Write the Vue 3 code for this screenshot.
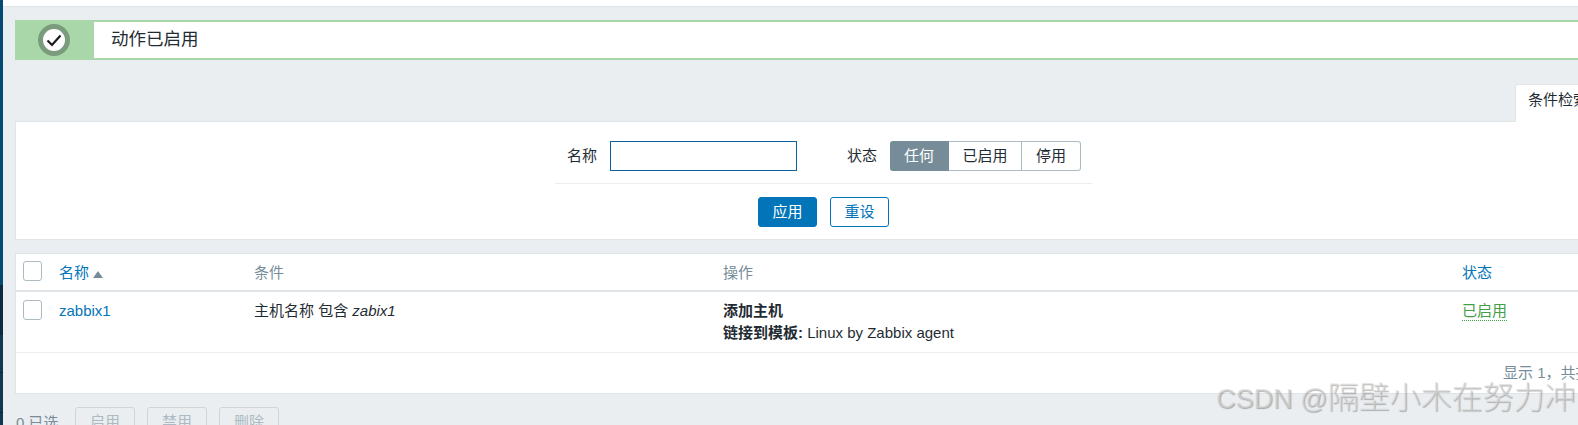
<script setup>
const segments = [
  { label: '任何', active: true },
  { label: '已启用', active: false },
  { label: '停用', active: false },
]
const bulk = ['启用', '禁用', '删除']
</script>

<template>
  <div class="page">
    <aside class="rail"></aside>
    <div class="main">
      <div class="topstrip"></div>
      <div class="content">
        <section class="msg">
          <div class="msg-icon">
            <span class="ring">
              <svg width="16" height="13" viewBox="0 0 16 13">
                <path d="M1.5 6.5 L6 11 L14.5 1.5" fill="none" stroke="#1b1b1b" stroke-width="2.2" />
              </svg>
            </span>
          </div>
          <div class="msg-text">动作已启用</div>
        </section>

        <div class="tabs"><div class="tab">条件检索</div></div>

        <section class="filter">
          <div class="filter-fields">
            <label class="flabel">名称</label>
            <input class="finput" type="text" />
            <label class="flabel status-label">状态</label>
            <div class="seg">
              <span v-for="s in segments" :key="s.label" class="seg-item" :class="{ on: s.active }">{{ s.label }}</span>
            </div>
          </div>
          <div class="filter-actions">
            <button class="btn primary">应用</button>
            <button class="btn outline">重设</button>
          </div>
        </section>

        <section class="list">
          <div class="row head">
            <div class="c0"><span class="check"></span></div>
            <div class="c1"><a class="link">名称</a><i class="arrow"></i></div>
            <div class="c2 muted">条件</div>
            <div class="c3 muted">操作</div>
            <div class="c4"><a class="link">状态</a></div>
          </div>
          <div class="row body">
            <div class="c0"><span class="check"></span></div>
            <div class="c1"><a class="link">zabbix1</a></div>
            <div class="c2">主机名称 包含 <em>zabix1</em></div>
            <div class="c3 ops"><b>添加主机</b><br /><b>链接到模板:</b> Linux by Zabbix agent</div>
            <div class="c4"><span class="enabled">已启用</span></div>
          </div>
          <div class="foot"><span>显示 1，共找到 1</span></div>
        </section>

        <div class="bulk">
          <span class="selected">0 已选</span>
          <button v-for="b in bulk" :key="b" class="bulk-btn">{{ b }}</button>
        </div>
      </div>
    </div>
    <div class="watermark">CSDN @<span class="wm-cjk">隔壁小木在努力冲</span></div>
  </div>
</template>

<style scoped>
.page {
  position: relative;
  display: flex;
  width: 1578px;
  height: 425px;
  overflow: hidden;
  background: #ebeef0;
  color: #1f2c33;
  font: 15px/20px "Liberation Sans", "Noto Sans CJK SC", sans-serif;
}
.rail {
  flex: 0 0 3px;
  background: linear-gradient(#064a73 0 285px, #0b2a40 285px 335px, #103852 335px 372px, #0a2438 372px 373px, #103852 373px 412px, #0a2438 412px 413px, #103852 413px);
}
.main { flex: 1; min-width: 0; }
.topstrip { height: 6px; background: #fff; border-bottom: 1px solid #dfe4e7; }
.content { padding: 13px 0 0 12px; width: 1800px; }
.msg {
  display: flex;
  height: 40px;
  box-sizing: border-box;
  border: 2px solid #a9d7a9;
  border-left: 0;
  border-radius: 3px;
  background: #fff;
}
.msg-icon {
  flex: 0 0 79px;
  box-sizing: border-box;
  padding-right: 1px;
  display: flex;
  align-items: center;
  justify-content: center;
  background: #a9d7a9;
  margin: -2px 0;
}
.ring {
  width: 32px;
  height: 32px;
  box-sizing: border-box;
  border: 5px solid #7a9c7d;
  border-radius: 50%;
  background: #fff;
  display: flex;
  align-items: center;
  justify-content: center;
}
.msg-text { padding-left: 17px; font-size: 17.5px; line-height: 34px; }
.tabs { display: flex; padding: 24px 0 0 1500px; height: 61px; box-sizing: border-box; }
.tab {
  width: 120px;
  height: 38px;
  box-sizing: border-box;
  padding: 5px 0 0 12px;
  background: #fff;
  border: 1px solid #dfe4e7;
  border-bottom: 0;
  border-radius: 3px 3px 0 0;
  margin-bottom: -1px;
  position: relative;
}
.filter {
  height: 119px;
  box-sizing: border-box;
  background: #fff;
  border: 1px solid #dfe4e7;
  padding-top: 19px;
}
.filter-fields {
  display: flex;
  align-items: flex-start;
  height: 42px;
  width: 537px;
  margin-left: 539px;
  border-bottom: 1px solid #ebeef0;
}
.flabel { line-height: 30px; margin-left: 12px; }
.finput {
  width: 187px;
  height: 30px;
  box-sizing: border-box;
  margin: 0 0 0 13px;
  border: 1px solid #0a639d;
  background: #fff;
  outline: 0;
}
.status-label { margin-left: 50px; }
.seg {
  display: flex;
  margin-left: 13px;
  height: 30px;
}
.seg-item {
  box-sizing: border-box;
  height: 30px;
  line-height: 28px;
  text-align: center;
  border: 1px solid #acbbc3;
  border-left: 0;
  background: #fff;
}
.seg-item:nth-child(1) { width: 59px; border-radius: 3px 0 0 3px; }
.seg-item:nth-child(2) { width: 73px; }
.seg-item:nth-child(3) { width: 59px; border-radius: 0 3px 3px 0; }
.seg-item.on { background: #768d99; border-color: #768d99; color: #fff; }
.filter-actions { display: flex; gap: 13px; margin: 13px 0 0 742px; }
.btn {
  width: 59px;
  height: 30px;
  box-sizing: border-box;
  border-radius: 3px;
  font: inherit;
  padding: 0;
}
.primary { background: #0275b8; border: 1px solid #0275b8; color: #fff; }
.outline { background: #fff; border: 1px solid #0275b8; color: #0275b8; }
.list {
  margin-top: 13px;
  height: 141px;
  box-sizing: border-box;
  background: #fff;
  border: 1px solid #dfe4e7;
}
.row { display: flex; }
.head {
  height: 34px;
  padding-top: 2px;
  border-bottom: 2px solid #dfe4e7;
  align-items: center;
}
.body {
  height: 61px;
  border-bottom: 1px solid #ebeef0;
  box-sizing: border-box;
  padding-top: 9px;
}
.c0 { flex: 0 0 43px; padding-left: 7px; box-sizing: border-box; }
.c1 { flex: 0 0 195px; display: flex; align-items: center; }
.body .c1 { align-items: flex-start; }
.c2 { flex: 0 0 469px; }
.c3 { flex: 0 0 739px; }
.c4 { flex: 1; }
.check {
  display: block;
  width: 19px;
  height: 20px;
  box-sizing: border-box;
  border: 1px solid #acbbc3;
  border-radius: 3px;
  background: #fff;
}
.head .check { margin-top: -4px; }
.body .check { margin-top: -1px; }
.link { color: #0275b8; }
.muted { color: #768d99; }
.arrow {
  width: 0;
  height: 0;
  margin: 2px 0 0 4px;
  border: 5px solid transparent;
  border-top: 0;
  border-bottom: 7px solid #768d99;
}
.ops { line-height: 22px; margin-top: -1px; }
.enabled { color: #429e47; border-bottom: 1px dotted #429e47; display: inline-block; line-height: 19px; }
.foot {
  height: 39px;
  padding: 10px 0 0 1487px;
  box-sizing: border-box;
  color: #768d99;
  white-space: nowrap;
}
.bulk { display: flex; align-items: flex-start; margin-top: 13px; color: #768d99; }
.selected { padding: 6px 0 0 1px; width: 59px; }
.bulk-btn {
  width: 60px;
  height: 30px;
  box-sizing: border-box;
  margin-right: 12px;
  border: 1px solid #cdd5da;
  border-radius: 3px;
  background: #ebeef0;
  color: #acbbc3;
  font: inherit;
  padding: 0;
}
.watermark {
  position: absolute;
  left: 1216px;
  top: 380px;
  font-size: 27px;
  font-weight: 300;
  line-height: 36px;
  white-space: nowrap;
  color: rgba(215, 215, 215, 0.6);
  text-shadow: 1px 1px 1px rgba(0, 0, 0, 0.28);
}
.wm-cjk { font-size: 31px; }
</style>
